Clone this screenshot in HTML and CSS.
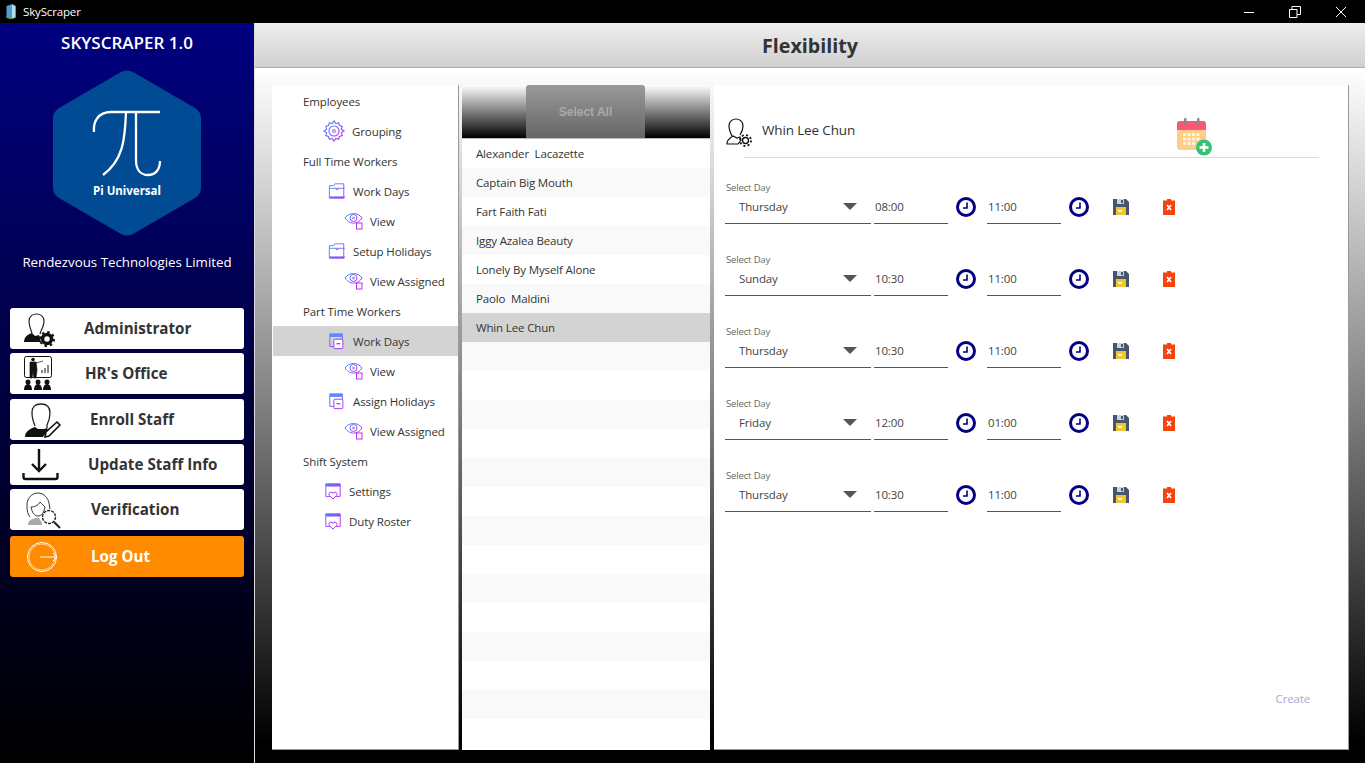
FILE: index.html
```html
<!DOCTYPE html>
<html>
<head>
<meta http-equiv="Content-Type" content="text/html; charset=utf-8"/>
<title>SkyScraper</title>
<link rel="stylesheet" href="styles.css">
</head>
<body>

<svg class="defs" width="0" height="0">
  <defs>
    <linearGradient id="grad" x1="0" y1="0" x2="1" y2="1">
      <stop offset="0" stop-color="#3f8cff"/>
      <stop offset="1" stop-color="#c02cf0"/>
    </linearGradient>
    <symbol id="i-gear" viewBox="0 0 24 24">
      <path d="M12 1l2 3 3-1 1 3 3 1-1 3 3 2-3 2 1 3-3 1-1 3-3-1-2 3-2-3-3 1-1-3-3-1 1-3-3-2 3-2-1-3 3-1 1-3 3 1z" fill="none" stroke="url(#grad)" stroke-width="1.2"/>
      <circle cx="12" cy="12" r="5.5" fill="none" stroke="url(#grad)" stroke-width="1.2"/>
      <circle cx="12" cy="12" r="2.5" fill="#b9a8f5"/>
    </symbol>
    <symbol id="i-case" viewBox="0 0 20 20">
      <path d="M1.500 4h5l1-2h10v16h-16z" fill="none" stroke="url(#grad)" stroke-width="1"/>
      <path d="M1.500 7h17M8 7l2 2 2-2" fill="none" stroke="url(#grad)" stroke-width="1"/>
      <path d="M1.500 16h17v2h-17z" fill="url(#grad)"/>
    </symbol>
    <symbol id="i-eye" viewBox="0 0 20 20">
      <path d="M1 7c4-6 13-6 17 0-2 3-4 4.500-7 5-4 .5-7-1-10-5z" fill="none" stroke="url(#grad)" stroke-width="1"/>
      <circle cx="9.500" cy="7" r="3.500" fill="none" stroke="url(#grad)" stroke-width="1"/>
      <circle cx="9.500" cy="7" r="1.500" fill="#a99cf0"/>
      <rect x="12.500" y="12" width="5.500" height="6" fill="#fff" stroke="#c02cf0"/>
    </symbol>
    <symbol id="i-doc" viewBox="0 0 20 20">
      <path d="M2 2h14v3h-14z" fill="#5a8cff" stroke="#5a8cff"/>
      <path d="M2 5v11h4M16 5v3" fill="none" stroke="url(#grad)" stroke-width="1.100"/>
      <rect x="6.500" y="8" width="10" height="10.500" rx="1" fill="#fff" stroke="#a040f0" stroke-width="1.100"/>
      <path d="M9.500 13h4" stroke="#a040f0" stroke-width="1.500"/>
    </symbol>
    <symbol id="i-heart" viewBox="0 0 20 20">
      <path d="M2 2h16v14h-5M7 16h-5v-14" fill="none" stroke="url(#grad)" stroke-width="1.100"/>
      <path d="M2 2h16v3h-16z" fill="url(#grad)"/>
      <path d="M10 19l-4-4c-2-3 2-5 4-2.500 2-2.500 6-.5 4 2.500z" fill="#fff" stroke="#b030f0" stroke-width="1.100"/>
    </symbol>
    <symbol id="i-clock" viewBox="0 0 20 20">
      <circle cx="10" cy="10" r="8.500" fill="none" stroke="#000080" stroke-width="3"/>
      <path d="M11 5.500v5.500h-4" fill="none" stroke="#000080" stroke-width="1.600"/>
    </symbol>
    <symbol id="i-save" viewBox="0 0 16 16">
      <path d="M0 0h13l3 3v13h-16z" fill="#47566b"/>
      <rect x="4" y="0" width="7" height="5" fill="#cdd3dc"/>
      <rect x="8" y="1" width="2" height="3" fill="#47566b"/>
      <rect x="3" y="8" width="10" height="8" fill="#f5c52c"/>
      <rect x="5" y="11" width="4" height="1.500" fill="#fff"/>
    </symbol>
    <symbol id="i-del" viewBox="0 0 12 16">
      <path d="M4 0h4v1.500h4v14.500h-12v-14.500h4z" fill="#f8420f"/>
      <path d="M4 6l4 5M8 6l-4 5" stroke="#fff" stroke-width="1.600"/>
    </symbol>
  </defs>
</svg>

<div class="titlebar">
  <svg class="app-icon" width="12" height="15" viewBox="0 0 12 15">
    <path d="M1.500 2l6-2 3 2v11l-4 2-5-2z" fill="#4a9fd0"/>
    <path d="M7 1l3.500 1v11l-3.500 2z" fill="#b9dcec"/>
    <path d="M1 13l5 2 5-2" fill="none" stroke="#8a9a5a"/>
  </svg>
  <span class="app-name">SkyScraper</span>
  <div class="win-btns">
    <svg width="12" height="12" viewBox="0 0 12 12"><path d="M1 6.500h10" stroke="#fff"/></svg>
    <svg width="12" height="12" viewBox="0 0 12 12"><path d="M.5 3.500h7.500v8h-7.500zM3 3.500v-3h8.500v8h-3.500" fill="none" stroke="#fff"/></svg>
    <svg width="12" height="12" viewBox="0 0 12 12"><path d="M1 1l10 10M11 1l-10 10" stroke="#fff"/></svg>
  </div>
</div>

<div class="app">
  <div class="sidebar">
    <div class="brand">SKYSCRAPER 1.0</div>
    <svg class="logo" width="148" height="166" viewBox="0 0 148 166">
      <path d="M68 2q6-3 12 0l62 36q6 4 6 10v70q0 6-6 10l-62 36q-6 3-12 0l-62-36q-6-4-6-10v-70q0-6 6-10z" fill="#004b93"/>
      <path d="M41 62c-1-10 4-20 17-20h49" fill="none" stroke="#fff" stroke-width="2.300"/>
      <path d="M73 42c-1 28-3 48-23 63M83 42v48c0 10 5 15 12 15 7 0 12-5 12-14" fill="none" stroke="#fff" stroke-width="2.300"/>
      <text class="logo-text" x="74" y="125" text-anchor="middle">Pi Universal</text>
    </svg>
    <div class="company">Rendezvous Technologies Limited</div>

    <div class="nav">
      <a class="navbtn nav-admin">
        <svg class="nav-icon" width="70" height="41" viewBox="0 0 70 41">
          <path d="M22 25c-2-5-3-8-3-12 0-5 4-7 7.500-7s7.500 2 7.500 7c0 4-1 6-3 10l-1 3" fill="none" stroke="#222" stroke-width="1.200"/>
          <path d="M14 34c0-5 4-8 8-9l3 3 4-1 2 7z" fill="#111"/>
          <circle cx="37" cy="31" r="4.500" fill="none" stroke="#111" stroke-width="3.500"/>
          <circle cx="37" cy="31" r="7" fill="none" stroke="#111" stroke-width="2" stroke-dasharray="2.500 3"/>
        </svg>
        <span class="nav-label">Administrator</span>
      </a>
      <a class="navbtn nav-hr">
        <svg class="nav-icon" width="70" height="41" viewBox="0 0 70 41">
          <rect x="14.500" y="3.500" width="27" height="21" rx="2" fill="none" stroke="#111"/>
          <circle cx="23" cy="6.500" r="1.800" fill="#111"/>
          <path d="M20 9h6l1 8-1 8h-2l-1-6-1 6h-2z M26 10l7-2" fill="#111" stroke="#111" stroke-width=".7"/>
          <path d="M32 20v-3M35 20v-5M38 20v-8" stroke="#111"/>
          <g fill="#111">
            <circle cx="18" cy="29" r="2.500"/><path d="M14 37c0-4 2-6 4-6s4 2 4 6z"/>
            <circle cx="28" cy="29" r="2.500"/><path d="M24 37c0-4 2-6 4-6s4 2 4 6z"/>
            <circle cx="37" cy="29" r="2.500"/><path d="M33 37c0-4 2-6 4-6s4 2 4 6z"/>
          </g>
        </svg>
        <span class="nav-label">HR's Office</span>
      </a>
      <a class="navbtn nav-enroll">
        <svg class="nav-icon" width="70" height="41" viewBox="0 0 70 41">
          <path d="M25 27c-2-5-3-8-3-13 0-7 4-9 9-9s9 2 9 9c0 5-1 8-3 12v3" fill="none" stroke="#222" stroke-width="1.300"/>
          <path d="M15 38c0-5 4-8 10-10l3 2h6l3-1 1 2-5 7z" fill="#111"/>
          <path d="M35 38l1-5 11-10 3 3-11 11z" fill="#fff" stroke="#111" stroke-width="1.600"/>
        </svg>
        <span class="nav-label">Enroll Staff</span>
      </a>
      <a class="navbtn nav-update">
        <svg class="nav-icon" width="70" height="41" viewBox="0 0 70 41">
          <path d="M29 5v22M22 20l7 7 7-7" fill="none" stroke="#111" stroke-width="2.400"/>
          <path d="M13.500 29v4q0 2 2 2h30q2 0 2-2v-4" fill="none" stroke="#111" stroke-width="2.400"/>
        </svg>
        <span class="nav-label">Update Staff Info</span>
      </a>
      <a class="navbtn nav-verify">
        <svg class="nav-icon" width="70" height="41" viewBox="0 0 70 41">
          <path d="M20 28c-3-4-3-8-3-12 0-7 5-12 11-12s10 5 11 10l1 6" fill="none" stroke="#333"/>
          <path d="M21 18c3 0 7-1 9-5 2 2 4 4 5 5-1 6-4 9-7 9-4 0-6-4-7-9z" fill="#fff" stroke="#333"/>
          <path d="M18 36h14v-2l-3-5h-3c-5 1-8 3-8 7z" fill="#aaa"/>
          <circle cx="39" cy="28" r="6.500" fill="#fff" stroke="#222" stroke-width="1.400" stroke-dasharray="3 1"/>
          <path d="M44 33l6 6" stroke="#222" stroke-width="2"/>
        </svg>
        <span class="nav-label">Verification</span>
      </a>
      <a class="navbtn nav-logout">
        <svg class="nav-icon" width="70" height="41" viewBox="0 0 70 41">
          <circle cx="32" cy="21" r="14.500" fill="none" stroke="#fff"/>
          <circle cx="32" cy="21" r="13" fill="none" stroke="#fff" stroke-opacity=".6"/>
          <path d="M30 21h17M43 17l4 4-4 4" fill="none" stroke="#fff"/>
        </svg>
        <span class="nav-label">Log Out</span>
      </a>
    </div>
  </div>

  <div class="main">
    <div class="header">Flexibility</div>
    <div class="panels">

      <div class="panel tree">
        <div class="tree-row lvl0"><span>Employees</span></div>
        <div class="tree-row lvl1"><svg width="22" height="22"><use href="#i-gear"/></svg><span>Grouping</span></div>
        <div class="tree-row lvl0"><span>Full Time Workers</span></div>
        <div class="tree-row lvl2"><svg width="18" height="18"><use href="#i-case"/></svg><span>Work Days</span></div>
        <div class="tree-row lvl3"><svg width="20" height="20"><use href="#i-eye"/></svg><span>View</span></div>
        <div class="tree-row lvl2"><svg width="18" height="18"><use href="#i-case"/></svg><span>Setup Holidays</span></div>
        <div class="tree-row lvl3"><svg width="20" height="20"><use href="#i-eye"/></svg><span>View Assigned</span></div>
        <div class="tree-row lvl0"><span>Part Time Workers</span></div>
        <div class="tree-row lvl2 selected"><svg width="18" height="18"><use href="#i-doc"/></svg><span>Work Days</span></div>
        <div class="tree-row lvl3"><svg width="20" height="20"><use href="#i-eye"/></svg><span>View</span></div>
        <div class="tree-row lvl2"><svg width="18" height="18"><use href="#i-doc"/></svg><span>Assign Holidays</span></div>
        <div class="tree-row lvl3"><svg width="20" height="20"><use href="#i-eye"/></svg><span>View Assigned</span></div>
        <div class="tree-row lvl0"><span>Shift System</span></div>
        <div class="tree-row lvl4"><svg width="18" height="18"><use href="#i-heart"/></svg><span>Settings</span></div>
        <div class="tree-row lvl4"><svg width="18" height="18"><use href="#i-heart"/></svg><span>Duty Roster</span></div>
      </div>

      <div class="panel staff">
        <div class="staff-head"><button class="select-all">Select All</button></div>
        <div class="staff-list">
          <div class="staff-row">Alexander  Lacazette</div>
          <div class="staff-row">Captain Big Mouth</div>
          <div class="staff-row">Fart Faith Fati</div>
          <div class="staff-row">Iggy Azalea Beauty</div>
          <div class="staff-row">Lonely By Myself Alone</div>
          <div class="staff-row">Paolo  Maldini</div>
          <div class="staff-row selected">Whin Lee Chun</div>
          <div class="staff-row"></div><div class="staff-row"></div><div class="staff-row"></div>
          <div class="staff-row"></div><div class="staff-row"></div><div class="staff-row"></div>
          <div class="staff-row"></div><div class="staff-row"></div><div class="staff-row"></div>
          <div class="staff-row"></div><div class="staff-row"></div><div class="staff-row"></div>
          <div class="staff-row"></div><div class="staff-row"></div>
        </div>
      </div>

      <div class="panel detail">
        <div class="detail-head">
          <svg class="user-icon" width="28" height="30" viewBox="0 0 28 30">
            <path d="M6 18c-2-4-3-7-3-10 0-5 4-7 7-7s7 2 7 7c0 3-1 6-3 9" fill="none" stroke="#111" stroke-width="1.200"/>
            <path d="M1 25c0-3 3-5 6-7l4 2 3-1 1 3-3 4H1z" fill="#fff" stroke="#111" stroke-width="1.200"/>
            <circle cx="19.500" cy="22.500" r="3" fill="none" stroke="#111" stroke-width="1.400"/>
            <circle cx="19.500" cy="22.500" r="5.500" fill="none" stroke="#111" stroke-width="1.800" stroke-dasharray="2 2.300"/>
          </svg>
          <span class="detail-name">Whin Lee Chun</span>
          <svg class="cal-add" width="37" height="38" viewBox="0 0 37 38">
            <rect x="1" y="3" width="29" height="29" rx="3" fill="#ffcf87"/>
            <path d="M1 12v-6q0-3 3-3h23q3 0 3 3v6z" fill="#f9587a"/>
            <rect x="8" y="0" width="2.500" height="7" rx="1" fill="#888"/>
            <rect x="21" y="0" width="2.500" height="7" rx="1" fill="#888"/>
            <g fill="#fff3dd">
              <rect x="7" y="15" width="3" height="3"/><rect x="11.500" y="15" width="3" height="3"/><rect x="16" y="15" width="3" height="3"/><rect x="20.500" y="15" width="3" height="3"/>
              <rect x="7" y="19.500" width="3" height="3"/><rect x="11.500" y="19.500" width="3" height="3"/><rect x="16" y="19.500" width="3" height="3"/><rect x="20.500" y="19.500" width="3" height="3"/>
              <rect x="7" y="24" width="3" height="3"/><rect x="11.500" y="24" width="3" height="3"/><rect x="16" y="24" width="3" height="3"/>
            </g>
            <circle cx="28" cy="29.500" r="8" fill="#36c276"/>
            <path d="M23.500 29.500h9M28 25v9" stroke="#fff" stroke-width="2.600"/>
          </svg>
        </div>
        <div class="detail-rule"></div>

        <div class="day-rows">
          <div class="day-row">
            <div class="field day-field"><label>Select Day</label><div class="value"><span>Thursday</span><i class="caret"></i></div></div>
            <div class="field time"><div class="value">08:00</div></div>
            <svg class="clock" width="20" height="20"><use href="#i-clock"/></svg>
            <div class="field time"><div class="value">11:00</div></div>
            <svg class="clock" width="20" height="20"><use href="#i-clock"/></svg>
            <svg class="save" width="16" height="16"><use href="#i-save"/></svg>
            <svg class="del" width="12" height="16"><use href="#i-del"/></svg>
          </div>
          <div class="day-row">
            <div class="field day-field"><label>Select Day</label><div class="value"><span>Sunday</span><i class="caret"></i></div></div>
            <div class="field time"><div class="value">10:30</div></div>
            <svg class="clock" width="20" height="20"><use href="#i-clock"/></svg>
            <div class="field time"><div class="value">11:00</div></div>
            <svg class="clock" width="20" height="20"><use href="#i-clock"/></svg>
            <svg class="save" width="16" height="16"><use href="#i-save"/></svg>
            <svg class="del" width="12" height="16"><use href="#i-del"/></svg>
          </div>
          <div class="day-row">
            <div class="field day-field"><label>Select Day</label><div class="value"><span>Thursday</span><i class="caret"></i></div></div>
            <div class="field time"><div class="value">10:30</div></div>
            <svg class="clock" width="20" height="20"><use href="#i-clock"/></svg>
            <div class="field time"><div class="value">11:00</div></div>
            <svg class="clock" width="20" height="20"><use href="#i-clock"/></svg>
            <svg class="save" width="16" height="16"><use href="#i-save"/></svg>
            <svg class="del" width="12" height="16"><use href="#i-del"/></svg>
          </div>
          <div class="day-row">
            <div class="field day-field"><label>Select Day</label><div class="value"><span>Friday</span><i class="caret"></i></div></div>
            <div class="field time"><div class="value">12:00</div></div>
            <svg class="clock" width="20" height="20"><use href="#i-clock"/></svg>
            <div class="field time"><div class="value">01:00</div></div>
            <svg class="clock" width="20" height="20"><use href="#i-clock"/></svg>
            <svg class="save" width="16" height="16"><use href="#i-save"/></svg>
            <svg class="del" width="12" height="16"><use href="#i-del"/></svg>
          </div>
          <div class="day-row">
            <div class="field day-field"><label>Select Day</label><div class="value"><span>Thursday</span><i class="caret"></i></div></div>
            <div class="field time"><div class="value">10:30</div></div>
            <svg class="clock" width="20" height="20"><use href="#i-clock"/></svg>
            <div class="field time"><div class="value">11:00</div></div>
            <svg class="clock" width="20" height="20"><use href="#i-clock"/></svg>
            <svg class="save" width="16" height="16"><use href="#i-save"/></svg>
            <svg class="del" width="12" height="16"><use href="#i-del"/></svg>
          </div>
        </div>

        <div class="detail-foot"><span class="create">Create</span></div>
      </div>

    </div>
  </div>
</div>

</body>
</html>
```
FILE: styles.css
```css
html, body {
  margin: 0;
  height: 100%;
}

body {
  width: 1365px;
  height: 763px;
  overflow: hidden;
  display: flex;
  flex-direction: column;
  font-family: "Open Sans", "Noto Sans", sans-serif;
  font-size: 11.5px;
  letter-spacing: -0.15px;
  color: #333;
  background-color: black;
}

.defs {
  position: absolute;
}

.titlebar {
  height: 23px;
  flex: none;
  display: flex;
  align-items: center;
  background-color: black;
  color: white;
}

.app-icon {
  margin-left: 5px;
}

.app-name {
  margin-left: 6px;
}

.win-btns {
  margin-left: auto;
  display: flex;
  gap: 34px;
  padding-right: 18px;
}

.app {
  flex: 1;
  display: flex;
  min-height: 0;
}

/* left column */
.sidebar {
  width: 254px;
  flex: none;
  display: flex;
  flex-direction: column;
  align-items: center;
  border-right: 1px solid #ddd;
  background: linear-gradient(#000080, #000000);
  color: white;
  letter-spacing: 0;
}

.brand {
  margin-top: 7px;
  height: 25px;
  line-height: 25px;
  font-size: 17px;
  font-weight: 600;
}

.logo {
  margin-top: 15px;
}

.logo-text {
  font-family: "Noto Sans", sans-serif;
  font-size: 11.5px;
  font-weight: 700;
  fill: white;
}

.company {
  margin-top: 16px;
  height: 20px;
  line-height: 20px;
  font-size: 13.3px;
}

.nav {
  margin-top: 36px;
  width: 234px;
  display: flex;
  flex-direction: column;
  gap: 4px;
}

.navbtn {
  height: 41px;
  display: flex;
  align-items: center;
  background-color: white;
  border-radius: 3px;
  color: #333;
  font-size: 15.2px;
  font-weight: 700;
}

.nav-icon {
  flex: none;
}

.nav-label {
  padding-bottom: 2px;
}

.nav-admin .nav-label { margin-left: 4px; }
.nav-hr .nav-label { margin-left: 5px; }
.nav-enroll { margin-top: 1px; }
.nav-enroll .nav-label { margin-left: 10px; }
.nav-update .nav-label { margin-left: 8px; }
.nav-verify .nav-label { margin-left: 11px; }

.nav-logout {
  margin-top: 2px;
  background-color: #ff8c00;
  color: white;
}
.nav-logout .nav-label { margin-left: 11px; }

/* right side */
.main {
  flex: 1;
  display: flex;
  flex-direction: column;
  min-width: 0;
}

.header {
  height: 44px;
  flex: none;
  line-height: 46px;
  text-align: center;
  font-size: 19.7px;
  font-weight: 700;
  letter-spacing: 0;
  color: #333;
  background: linear-gradient(#eeeeee, #d0d0d0);
  border-bottom: 1px solid #aaa;
}

.panels {
  flex: 1;
  display: flex;
  gap: 3px;
  padding: 17px 16px 13px 17px;
  min-height: 0;
  background: linear-gradient(#ffffff, #000000 97%);
}

.panel {
  background-color: white;
  border-right: 1px solid #999;
  border-bottom: 1px solid #999;
  box-sizing: border-box;
}

.tree {
  width: 187px;
  flex: none;
  padding: 1px 0 0 1px;
  letter-spacing: -0.1px;
}

.tree-row {
  height: 30px;
  display: flex;
  align-items: center;
  gap: 7px;
}

.lvl0 { padding-left: 30px; }
.lvl1 { padding-left: 50px; }
.lvl2 { padding-left: 55px; }
.lvl3 { padding-left: 71px; gap: 6px; }
.lvl4 { padding-left: 51px; }

.tree-row.selected {
  background-color: #d3d3d3;
}

.staff {
  width: 248px;
  flex: none;
  background: none;
  border: none;
  display: flex;
  flex-direction: column;
}

.staff-head {
  height: 53px;
  flex: none;
  display: flex;
  justify-content: center;
  padding-right: 1px;
  box-sizing: border-box;
  background: linear-gradient(#ffffff, #000000);
}

.select-all {
  width: 119px;
  height: 53px;
  padding: 0;
  border: none;
  border-radius: 3px 3px 0 0;
  background: linear-gradient(#999999, #666666);
  color: #aaaaaa;
  font-family: "Liberation Sans", sans-serif;
  font-size: 12px;
  font-weight: 700;
}

.staff-list {
  flex: 1;
  border-top: 1px solid #bbb;
  min-height: 0;
  overflow: hidden;
  background-color: white;
}

.staff-row {
  height: 29px;
  line-height: 29px;
  padding-left: 14px;
  white-space: pre;
  background-color: white;
}

.staff-row:nth-child(even) {
  background-color: #f9f9f9;
}

.staff-row.selected {
  background-color: #d3d3d3;
}

.detail {
  flex: 1;
  margin-left: 1px;
  display: flex;
  flex-direction: column;
}

.detail-head {
  height: 72px;
  flex: none;
  display: flex;
  align-items: flex-start;
  padding: 32px 0 0 12px;
  box-sizing: border-box;
}

.user-icon {
  margin-top: 1px;
}

.detail-name {
  margin-left: 8px;
  margin-top: 4px;
  font-size: 13.5px;
}

.cal-add {
  margin-left: 321px;
  margin-top: 1px;
}

.detail-rule {
  height: 1px;
  flex: none;
  margin: 0 29px 0 30px;
  background-color: #ddd;
}

.day-rows {
  margin-top: 22px;
  padding-left: 11px;
  display: flex;
  flex-direction: column;
  gap: 28px;
}

.day-row {
  height: 44px;
  display: flex;
  align-items: flex-end;
}

.field {
  border-bottom: 1px solid #555;
}

.field label {
  display: block;
  height: 14px;
  line-height: 16px;
  padding-left: 1px;
  font-size: 9.5px;
  color: #666;
}

.value {
  height: 24px;
  padding-bottom: 5px;
  display: flex;
  align-items: center;
  color: #444;
}

.day-field {
  width: 146px;
}

.day-field .value {
  padding-left: 14px;
  padding-right: 14px;
  justify-content: space-between;
}

.caret {
  width: 0;
  height: 0;
  border-left: 7px solid transparent;
  border-right: 7px solid transparent;
  border-top: 7px solid #555;
}

.time {
  width: 74px;
  margin-left: 3px;
}

.time .value {
  padding-left: 1px;
}

.clock {
  margin: 0 8px 7px 8px;
}

.day-row .clock + .time {
  margin-left: 3px;
}

.save {
  margin-left: 16px;
  margin-bottom: 9px;
}

.del {
  margin-left: 34px;
  margin-bottom: 9px;
}

.detail-foot {
  margin-top: auto;
  padding: 0 38px 43px 0;
  text-align: right;
}

.create {
  color: #a9a9d8;
}
```
